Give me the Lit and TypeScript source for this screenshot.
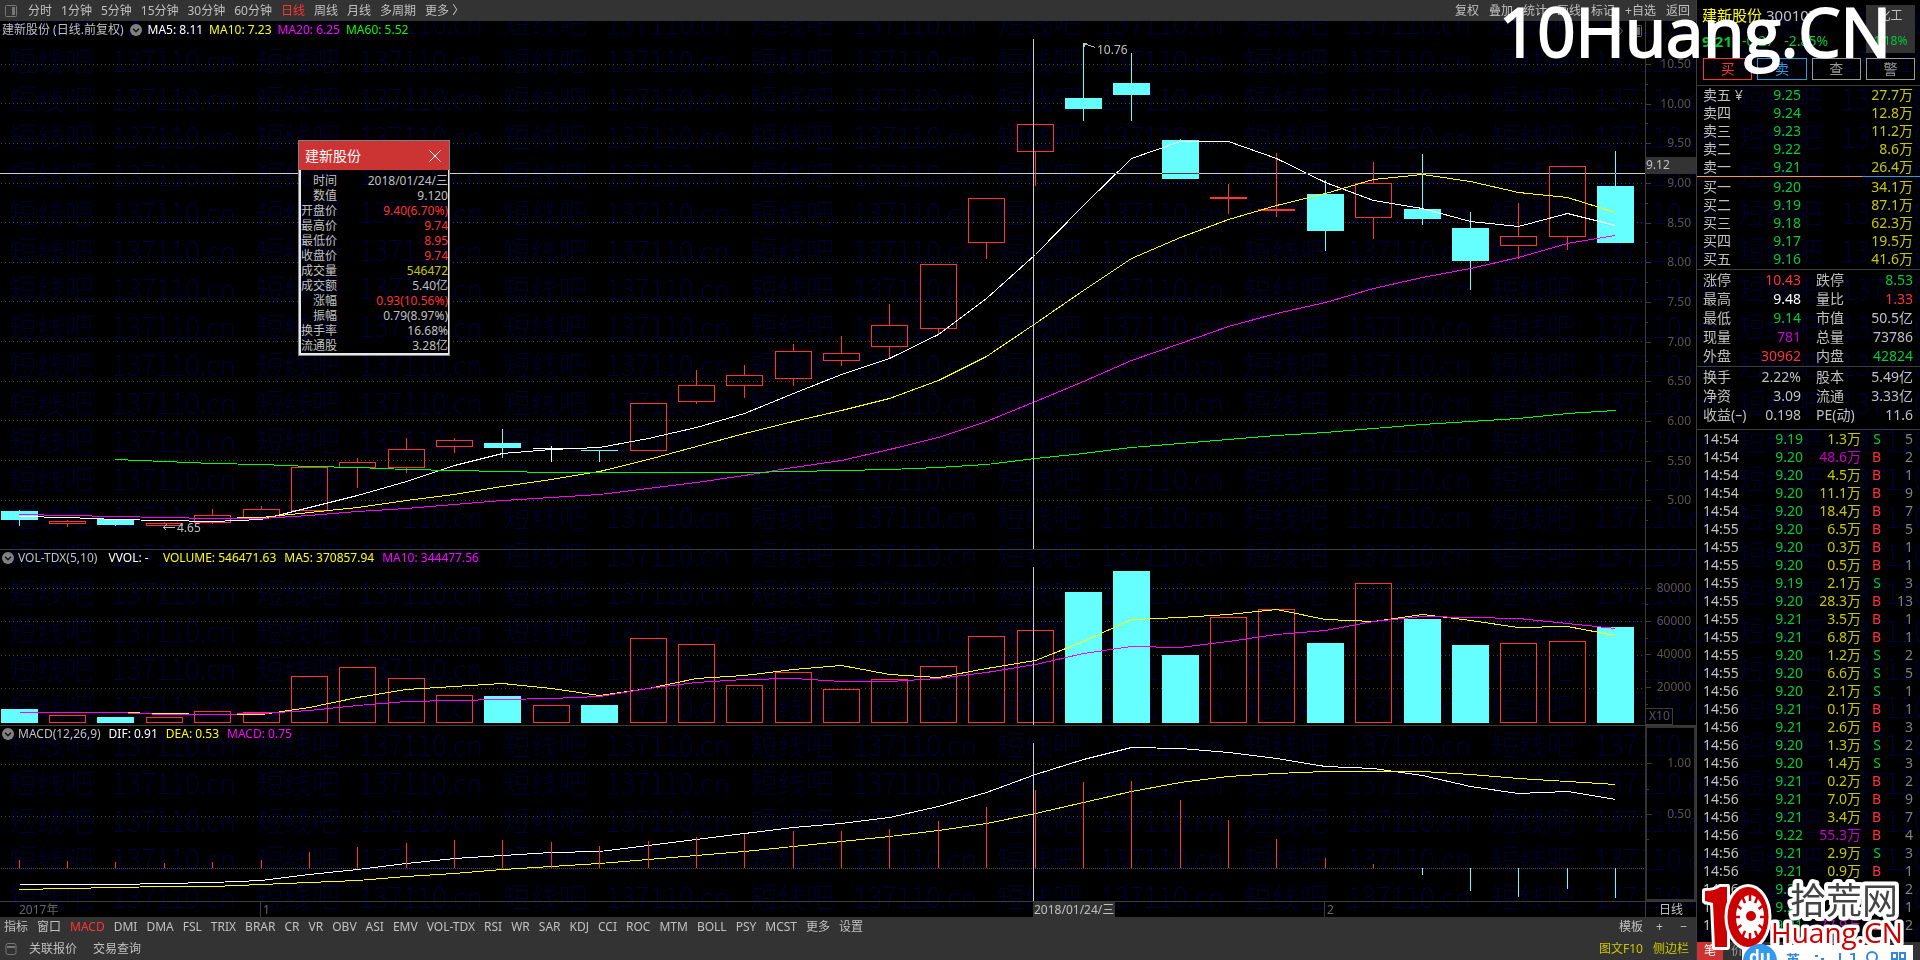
import { LitElement, html, svg, css } from "lit";
import { customElement, state } from "lit/decorators.js";

type Kind = "up" | "down" | "flat";
type Candle = [Kind, number, number, number, number, number, number];

const FIRST = 19.1;
const STEP = 48.38;
const PLOT_W = 1645;
const cx = (i: number) => Math.floor(FIRST + i * STEP) + 0.5;

// kind, high, body top, body bottom, low, volume top, macd bar end
const CANDLES: Candle[] = [
  ["down", 510, 511, 520, 526, 709, 860],
  ["up", 520, 521, 523, 527, 715, 861],
  ["down", 519, 519, 525, 526, 717, 862],
  ["up", 522, 523, 525, 525, 717, 863],
  ["up", 509, 515, 522, 524, 711, 862],
  ["up", 506, 509, 517, 517, 712, 860],
  ["up", 467, 467, 510, 510, 676, 852],
  ["up", 458, 462, 467, 488, 667, 847],
  ["up", 438, 449, 467, 473, 678, 843],
  ["up", 438, 440, 446, 453, 695, 840],
  ["down", 429, 443, 448, 458, 696, 840],
  ["flat", 446, 448, 449, 462, 705, 842],
  ["down", 450, 450, 451, 462, 705, 846],
  ["up", 403, 403, 450, 450, 638, 841],
  ["up", 370, 385, 401, 404, 644, 837],
  ["up", 365, 375, 385, 398, 685, 834],
  ["up", 344, 351, 378, 386, 672, 831],
  ["up", 336, 353, 360, 366, 689, 831],
  ["up", 304, 325, 346, 358, 679, 829],
  ["up", 264, 264, 328, 334, 666, 821],
  ["up", 198, 198, 242, 259, 636, 807],
  ["up", 124, 124, 151, 186, 630, 790],
  ["down", 43, 98, 109, 121, 592, 782],
  ["down", 53, 83, 95, 121, 571, 781],
  ["down", 139, 140, 179, 179, 655, 800],
  ["up", 184, 197, 198, 214, 617, 820],
  ["up", 153, 209, 210, 217, 609, 839],
  ["down", 180, 194, 231, 251, 643, 858],
  ["up", 162, 183, 217, 239, 583, 864],
  ["down", 154, 209, 219, 225, 619, 875],
  ["down", 212, 228, 261, 290, 645, 891],
  ["up", 203, 236, 245, 259, 643, 897],
  ["up", 166, 166, 236, 250, 641, 889],
  ["down", 151, 186, 243, 243, 627, 898],
];

const MA5 = [516, 517, 519, 520, 521, 519, 507, 495, 481, 465, 453, 449, 447, 438, 427, 413, 393, 374, 358, 334, 298, 254, 205, 158, 141, 141, 158, 182, 200, 208, 221, 226, 213, 225];
const MA10 = [514, 515, 516, 517, 518, 517, 512, 507, 500, 494, 486, 479, 471, 459, 446, 433, 421, 410, 398, 380, 356, 323, 290, 258, 237, 219, 205, 193, 179, 174, 181, 192, 197, 212];
const MA20 = [514, 515, 516, 517, 518, 518, 515, 511, 508, 504, 500, 497, 494, 488, 482, 475, 467, 460, 449, 437, 421, 401, 381, 360, 343, 326, 313, 302, 288, 277, 268, 257, 243, 235];
const MA60 = [459, 461, 463, 464, 466, 467, 469, 470, 471, 472, 472, 472, 472, 472, 471, 470, 469, 467, 464, 458, 453, 447, 443, 439, 435, 432, 428, 424, 421, 418, 413, 410];
const VMA5 = [712, 712, 712, 713, 714, 714, 707, 697, 689, 686, 683, 688, 695, 688, 678, 675, 669, 665, 674, 677, 668, 660, 641, 619, 617, 614, 609, 619, 621, 614, 620, 627, 626, 635];
const VMA10 = [712, 712, 712, 714, 714, 713, 710, 705, 701, 700, 699, 698, 696, 688, 682, 679, 678, 681, 681, 678, 672, 664, 653, 646, 647, 641, 634, 630, 621, 616, 617, 618, 623, 628];
const DIF = [884, 884, 884, 883, 882, 880, 874, 869, 863, 858, 855, 852, 851, 845, 839, 833, 827, 823, 817, 806, 792, 774, 759, 747, 748, 752, 758, 766, 768, 775, 786, 793, 791, 799];
const DEA = [889, 888, 887, 886, 886, 884, 882, 880, 876, 873, 869, 866, 863, 859, 855, 851, 846, 841, 836, 830, 823, 813, 802, 791, 782, 776, 773, 771, 771, 771, 774, 778, 781, 784];

const PERIODS = ["分时", "1分钟", "5分钟", "15分钟", "30分钟", "60分钟", "日线", "周线", "月线", "多周期", "更多 〉"];
const TOOLS = ["复权", "叠加", "统计", "画线", "标记", "+自选", "返回"];
const INDICATORS = ["指标", "窗口", "MACD", "DMI", "DMA", "FSL", "TRIX", "BRAR", "CR", "VR", "OBV", "ASI", "EMV", "VOL-TDX", "RSI", "WR", "SAR", "KDJ", "CCI", "ROC", "MTM", "BOLL", "PSY", "MCST", "更多", "设置"];

const SELLS = [["卖五", "9.25", "27.7万"], ["卖四", "9.24", "12.8万"], ["卖三", "9.23", "11.2万"], ["卖二", "9.22", "8.6万"], ["卖一", "9.21", "26.4万"]];
const BUYS = [["买一", "9.20", "34.1万"], ["买二", "9.19", "87.1万"], ["买三", "9.18", "62.3万"], ["买四", "9.17", "19.5万"], ["买五", "9.16", "41.6万"]];

const STATS_A = [
  ["涨停", "10.43", "red", "跌停", "8.53", "green"],
  ["最高", "9.48", "white", "量比", "1.33", "red"],
  ["最低", "9.14", "green", "市值", "50.5亿", ""],
  ["现量", "781", "magenta", "总量", "73786", ""],
  ["外盘", "30962", "red", "内盘", "42824", "green"],
];
const STATS_B = [
  ["换手", "2.22%", "", "股本", "5.49亿", ""],
  ["净资", "3.09", "", "流通", "3.33亿", ""],
  ["收益(–)", "0.198", "", "PE(动)", "11.6", ""],
];

const TICKS = `14:54 9.19 1.3 S 5
14:54 9.20 48.6 B 2
14:54 9.20 4.5 B 1
14:54 9.20 11.1 B 9
14:54 9.20 18.4 B 7
14:55 9.20 6.5 B 5
14:55 9.20 0.3 B 1
14:55 9.20 0.5 B 1
14:55 9.19 2.1 S 3
14:55 9.20 28.3 B 13
14:55 9.21 3.5 B 1
14:55 9.21 6.8 B 1
14:55 9.20 1.2 S 2
14:55 9.20 6.6 S 5
14:56 9.20 2.1 S 1
14:56 9.21 0.1 B 1
14:56 9.21 2.6 B 3
14:56 9.20 1.3 S 2
14:56 9.20 1.4 S 3
14:56 9.21 0.2 B 2
14:56 9.21 7.0 B 9
14:56 9.21 3.4 B 7
14:56 9.22 55.3 B 4
14:56 9.21 2.9 S 3
14:56 9.21 0.9 B 1
14:56 9.21 1.0 S 2
14:56 9.21 1.8 B 1
14:56 9.21 77.9 B 2`.split("\n").map((l) => l.split(" "));

const DETAIL = [
  ["时间", "2018/01/24/三", ""],
  ["数值", "9.120", ""],
  ["开盘价", "9.40(6.70%)", "red"],
  ["最高价", "9.74", "red"],
  ["最低价", "8.95", "red"],
  ["收盘价", "9.74", "red"],
  ["成交量", "546472", "olive"],
  ["成交额", "5.40亿", ""],
  ["涨幅", "0.93(10.56%)", "red"],
  ["振幅", "0.79(8.97%)", ""],
  ["换手率", "16.68%", ""],
  ["流通股", "3.28亿", ""],
];

const line = (ys: number[], color: string, from = 0) =>
  svg`<polyline points=${ys.map((y, i) => `${cx(i + from)},${y + 0.5}`).join(" ")} fill="none" stroke=${color}/>`;

const rules = (ys: number[]) =>
  ys.map((y) => svg`<line x1="1" x2=${PLOT_W} y1=${y + 0.5} y2=${y + 0.5} stroke="#444" stroke-dasharray="1 3"/>`);

const box = (i: number, top: number, bottom: number, kind: Kind) => {
  const x = cx(i) - 18.5;
  if (kind === "down") return svg`<rect x=${x} y=${top} width="37" height=${Math.max(1, bottom - top)} fill="#66ffff"/>`;
  if (kind === "flat") return svg`<rect x=${x} y=${top} width="37" height="1" fill="#fff"/>`;
  return svg`<rect x=${x + 0.5} y=${top + 0.5} width="36" height=${bottom - top} fill="none" stroke="#ff3333"/>`;
};

const tint = { up: "#ff3333", down: "#66ffff", flat: "#ffffff" };

const wick = (i: number, a: number, b: number, color: string) =>
  b > a ? svg`<line x1=${cx(i)} x2=${cx(i)} y1=${a} y2=${b} stroke=${color}/>` : null;

const watermark = (id: string, dx: number, dy: number) => html`
  <svg class="watermark" aria-hidden="true">
    <defs>
      <pattern id=${id} x=${dx} y=${dy} width="247" height="38" patternUnits="userSpaceOnUse">
        <text class="mark" y="29"><tspan x="9">短线吧</tspan><tspan x="112">137110.cn</tspan></text>
      </pattern>
    </defs>
    <rect width="100%" height="100%" fill=${`url(#${id})`}/>
  </svg>`;

const chevron = html`<svg class="chev" viewBox="0 0 12 12" aria-hidden="true"><circle cx="6" cy="6" r="6" fill="#808080"/><path d="M3 4.8l3 3 3-3" fill="none" stroke="#111" stroke-width="1.4"/></svg>`;

@customElement("app-root")
export class AppRoot extends LitElement {
  @state() private period = "日线";
  @state() private indicator = "MACD";
  @state() private detail = true;

  static styles = css`
    :host {
      display: grid;
      grid-template-columns: minmax(0, 1fr) 224px;
      height: 100vh;
      position: relative;
      overflow: hidden;
      isolation: isolate;
      background: #000;
      color: #c0c0c0;
      font: 12px/16px "Noto Sans", "Noto Sans CJK SC", sans-serif;
    }
    * { box-sizing: border-box; }
    button { font: inherit; color: inherit; background: none; border: 0; padding: 0; white-space: nowrap; cursor: pointer; }
    a { color: inherit; text-decoration: none; }
    table { border-collapse: collapse; table-layout: fixed; width: 100%; }
    td, th { padding: 0; font-weight: 400; text-align: right; white-space: nowrap; }
    th { text-align: left; }
    .watermark { position: absolute; inset: 0; width: 100%; height: 100%; z-index: -1; }
    .mark { font: 100 28px "Noto Sans CJK SC", sans-serif; fill: #000046; }
    .red { color: #ff3333; }
    .green { color: #00cc33; }
    .white { color: #fff; }
    .yellow { color: #ff0; }
    .olive { color: #c8c800; }
    .lime { color: #0f0; }
    .magenta { color: #c800c8; }
    .pink { color: #f0f; }

    .main { display: flex; flex-direction: column; min-width: 0; }
    .bar { display: flex; align-items: center; background: #333; flex: none; }
    .top { height: 21px; padding: 0 6px 0 5px; gap: 9px; }
    .top > .icon { margin-right: 2px; }
    .spring { flex: 1; }
    .icon { width: 12px; height: 12px; flex: none; }
    .tools { display: flex; gap: 10px; }

    .pane { display: flex; min-height: 0; border-top: 1px solid #3c3c3c; }
    .price { flex: 528 1 0; border-top: 0; }
    .sub { flex: 175 1 0; }
    .plot { flex: 1; position: relative; min-width: 0; }
    .chart { position: absolute; inset: 0; width: 100%; height: 100%; shape-rendering: crispEdges; }
    .cross { mix-blend-mode: difference; }
    .legend { position: relative; display: flex; align-items: center; height: 18px; padding-left: 2px; gap: 6px; color: #fff; white-space: nowrap; }
    .sub .legend { gap: 8px; height: 16px; }
    .sub .chev { margin-right: -4px; }
    .legend .name { color: #c0c0c0; }
    .chev { width: 12px; height: 12px; flex: none; }
    .corner { position: absolute; top: 4px; right: 3px; display: flex; gap: 6px; }
    .note { position: absolute; transform: translateY(-50%); }
    .axis { flex: none; width: 51px; border-left: 1px solid #3c3c3c; display: flex; flex-direction: column; color: #5c5454; position: relative; }
    .axis.a { padding: 23px 0 29px; }
    .axis.b { padding: 21px 0 0; }
    .axis.c { padding: 10px 0 60px; border: 2px solid #333; }
    .tick { flex: 1; display: flex; align-items: center; justify-content: flex-end; padding-right: 5px; position: relative; min-height: 0; }
    .c .tick { padding-right: 3px; }
    .tick::before, .tick::after { content: ""; position: absolute; left: 0; top: 50%; width: 5px; height: 1px; background: #3c3c3c; }
    .tick::after { top: 100%; width: 2px; }
    .unit { align-self: flex-start; border: 1px solid #3c3c3c; border-left: 0; height: 17px; width: 27px; line-height: 14px; padding-left: 3px; margin-top: 4px; }
    .tag { position: absolute; left: 0; right: 0; height: 17px; background: #333; color: #c0c0c0; }

    .dates { display: flex; height: 16px; flex: none; border-top: 1px solid #3c3c3c; color: #666; }
    .dates .plot { overflow: hidden; }
    .date { position: absolute; top: 0; height: 100%; line-height: 15px; }
    .split { border-left: 1px solid #3c3c3c; padding-left: 2px; }
    .hot { background: #333; color: #c0c0c0; padding: 0 1px; }
    .unitday { width: 51px; border-left: 1px solid #3c3c3c; text-align: center; line-height: 15px; color: #c0c0c0; }
    .tabs { height: 21px; padding: 0 9px 1px 4px; gap: 9px; }
    .foot { height: 22px; padding: 0 7px 0 5px; gap: 12px; }
    .foot .pair { display: flex; gap: 16px; }
    .foot .links { display: flex; gap: 10px; }
    .zoomers { display: flex; width: 35px; justify-content: space-between; padding-left: 4px; }

    .card { position: absolute; left: 298px; top: 119px; width: 152px; border: 1px solid #808080; background: #000; z-index: 1; isolation: isolate; }
    .cardhead { display: flex; justify-content: space-between; align-items: center; height: 29px; background: #cc3333; color: #fff; font-size: 14px; padding: 0 8px 0 6px; }
    .cardhead svg { width: 12px; height: 12px; display: block; }
    .cardbody { position: relative; border: solid #e8e8e8; border-width: 0 1px 2px 2px; padding: 3px 0 0; isolation: isolate; overflow: hidden; }
    .cardbody tr { height: 15px; }
    .cardbody td, .cardbody th { line-height: 15px; text-align: right; }
    .cardbody th { width: 36px; }

    .side { border-left: 1px solid #3c3c3c; display: flex; flex-direction: column; font-size: 14px; line-height: 18px; min-width: 0; overflow: hidden; }
    .quote { display: flex; padding: 5px 5px 0 5px; justify-content: space-between; height: 53px; flex: none; }
    .title { font-size: 15px; line-height: 20px; display: flex; gap: 4px; }
    .now { display: flex; gap: 10px; line-height: 20px; padding-top: 6px; }
    .now b { font-size: 15px; }
    .sector { width: 49px; height: 48px; background: #333; font-size: 12px; text-align: center; display: flex; flex-direction: column; justify-content: space-between; padding: 2px 0 3px; }
    .deal { display: grid; grid-template-columns: repeat(4, 1fr); gap: 5px; padding: 5px 5px 5px 6px; flex: none; }
    .deal button { height: 22px; border: 1px solid #999; color: #999; line-height: 18px; }
    .deal .buy { border-color: #ff3333; color: #ff3333; }
    .deal .sell { border-color: #3399dd; color: #3399dd; }
    .block { border-top: 1px solid #3c3c3c; padding: 0 7px 0 6px; flex: none; }
    .block tr { height: 18px; }
    .block td, .block th { line-height: 18px; }
    .p0 { width: 49px; }
    .p1 { width: 49px; }
    .split2 { height: 1px; flex: none; background: linear-gradient(90deg, #ff9933 0 74%, #3399dd 74%); }
    .bids { border-top: 0; padding-top: 1px; padding-bottom: 1px; }
    .stats tr { height: 19px; }
    .statsa { padding-bottom: 1px; }
    .statsb { padding-bottom: 5px; }
    .stats .k1 { width: 39px; }
    .stats .v1 { width: 59px; }
    .stats .k2 { padding-left: 15px; width: 62px; }
    .ticks { flex: 1; min-height: 0; overflow: hidden; }
    .ticks .t { width: 50px; }
    .ticks .p { width: 50px; }
    .ticks .v { width: 58px; }
    .ticks .s { width: 20px; }
    .num { color: #808080; }
    .sidefoot { display: flex; background: #333; height: 18px; flex: none; font-size: 12px; color: #999; gap: 8px; }
    .sidefoot button { line-height: 18px; }
    .sidefoot .on { background: #cc3333; color: #fff; width: 26px; }

    .brand { position: absolute; right: 29px; top: -14px; font: 67px/90px "Open Sans", "Noto Sans", sans-serif; color: #fff; -webkit-text-stroke: 2px #fff; z-index: 2; pointer-events: none; }
    .logo { position: absolute; right: 0; bottom: 0; width: 220px; height: 84px; z-index: 2; pointer-events: none; }
    .logo .cn { font: 36px "Noto Sans CJK SC", sans-serif; }
    .logo .en { font: 28px "Open Sans", "Noto Sans", sans-serif; }
    .logo .ime { font: 700 14px "Noto Sans CJK SC", sans-serif; }
    .logo .du { font: 700 17px "Noto Sans", sans-serif; }
  `;

  private pricePane() {
    return html`<section class="pane price">
      <div class="plot">
        <svg class="chart" viewBox="0 21 1645 528" preserveAspectRatio="none">
          ${rules([64, 103, 143, 183, 222, 262, 301, 341, 381, 420, 460, 500])}
          ${CANDLES.map(([k, h, t, b, l], i) => svg`${wick(i, h, t, tint[k])}${wick(i, b, l, tint[k])}${box(i, t, b, k)}`)}
          ${line(MA5, "#fff")}${line(MA10, "#ff0")}${line(MA20, "#f0f")}${line(MA60, "#0f0", 2)}
          <path d="M1083.5 43.5l12 4M1083.5 43.5h3M1084 43l1 4M163.5 527.5h11M163.5 527.5l3-3M163.5 527.5l3 3" stroke="#c0c0c0" fill="none"/>
          <line class="cross" x1="0" x2="1645" y1="173.5" y2="173.5" stroke="#ccc"/>
          <line x1="1033.5" x2="1033.5" y1="39" y2="549" stroke="#ccc"/>
        </svg>
        <div class="legend">
          <span class="name">建新股份 (日线.前复权)</span>${chevron}
          <span>MA5: 8.11</span><span class="yellow">MA10: 7.23</span><span class="pink">MA20: 6.25</span><span class="lime">MA60: 5.52</span>
        </div>
        <div class="corner">
          <svg class="icon" viewBox="0 0 12 12"><path d="M6 1l4.5 5L6 11 1.5 6z" fill="none" stroke="#666"/></svg>
          <svg class="icon" viewBox="0 0 12 12"><rect x=".5" y=".5" width="11" height="11" rx="1" fill="none" stroke="#666"/><path d="M7 2h3v8H7z" fill="#666"/></svg>
        </div>
        <span class="note" style="left:${(1097 / PLOT_W) * 100}%;top:${(29 / 528) * 100}%">10.76</span>
        <span class="note" style="left:${(177 / PLOT_W) * 100}%;top:${(507 / 528) * 100}%">4.65</span>
        ${this.detail ? this.card() : null}
      </div>
      <div class="axis a">
        ${["10.50", "10.00", "9.50", "9.00", "8.50", "8.00", "7.50", "7.00", "6.50", "6.00", "5.50", "5.00"].map((v) => html`<span class="tick">${v}</span>`)}
        <span class="tag" style="top:${(136 / 528) * 100}%">9.12</span>
      </div>
    </section>`;
  }

  private card() {
    return html`<div class="card" role="dialog" aria-label="建新股份">
      <div class="cardhead"><span>建新股份</span>
        <button aria-label="关闭" @click=${() => (this.detail = false)}><svg viewBox="0 0 12 12"><path d="M.5 .5l11 11M11.5 .5l-11 11" stroke="#fff" fill="none"/></svg></button>
      </div>
      <div class="cardbody">
        ${watermark("wm2", -54, -14)}
        <table>${DETAIL.map(([k, v, c]) => html`<tr><th scope="row">${k}</th><td class=${c}>${v}</td></tr>`)}</table>
      </div>
    </div>`;
  }

  private volumePane() {
    return html`<section class="pane sub">
      <div class="plot">
        <svg class="chart" viewBox="0 550 1645 175" preserveAspectRatio="none">
          ${rules([588, 621, 655, 688])}
          ${CANDLES.map((c, i) => box(i, c[5], c[0] === "down" ? 723 : 722, c[0] === "flat" ? "up" : c[0]))}
          ${line(VMA5, "#ff0")}${line(VMA10, "#f0f")}
          <line x1="1033.5" x2="1033.5" y1="567" y2="725" stroke="#ccc"/>
        </svg>
        <div class="legend">${chevron}<span class="name">VOL-TDX(5,10)</span><span>&nbsp;VVOL: -&nbsp;&nbsp;</span><span class="yellow">VOLUME: 546471.63</span><span class="yellow">MA5: 370857.94</span><span class="pink">MA10: 344477.56</span></div>
      </div>
      <div class="axis b">
        ${["80000", "60000", "40000", "20000"].map((v) => html`<span class="tick">${v}</span>`)}
        <span class="unit">X10</span>
      </div>
    </section>`;
  }

  private macdPane() {
    return html`<section class="pane sub">
      <div class="plot">
        <svg class="chart" viewBox="0 726 1645 175" preserveAspectRatio="none">
          ${rules([764, 816])}
          <line x1="1" x2="1645" y1="868.5" y2="868.5" stroke="#555" stroke-dasharray="1 1"/>
          ${line(DIF, "#fff")}${line(DEA, "#ff0")}
          ${CANDLES.map((c, i) => (c[6] < 868 ? wick(i, c[6], 868, "#ff3333") : wick(i, 868, c[6], "#66ffff")))}
          <line x1="1033.5" x2="1033.5" y1="743" y2="901" stroke="#ccc"/>
        </svg>
        <div class="legend">${chevron}<span class="name">MACD(12,26,9)</span><span>DIF: 0.91</span><span class="yellow">DEA: 0.53</span><span class="pink">MACD: 0.75</span></div>
      </div>
      <div class="axis c"><span class="tick">1.00</span><span class="tick">0.50</span></div>
    </section>`;
  }

  private depth(rows: string[][], yen = false) {
    return html`<table><colgroup><col class="p0" /><col class="p1" /><col /></colgroup>
      ${rows.map(([k, p, v], i) => html`<tr><th scope="row">${k}${yen && i === 0 ? " ¥" : ""}</th><td class="green">${p}</td><td class="olive">${v}</td></tr>`)}</table>`;
  }

  private stats(rows: string[][]) {
    return html`<table>${rows.map((r) => html`<tr><th class="k1" scope="row">${r[0]}</th><td class="v1 ${r[2]}">${r[1]}</td><th class="k2" scope="row">${r[3]}</th><td class=${r[5]}>${r[4]}</td></tr>`)}</table>`;
  }

  private logo() {
    const teeth = [0, 30, 60, 90, 120, 150, 180, 210, 240, 270, 300, 330];
    return html`<svg class="logo" viewBox="1700 876 220 84" aria-hidden="true">
      <rect x="1742" y="945" width="171" height="16" fill="#fff"/>
      <g fill="#cc0000" stroke="#fff" stroke-width="6" stroke-linejoin="round" paint-order="stroke">
        <path d="M1705 891q10 0 15-4h7v60h-12l-2-44-8-2z"/>
        <ellipse cx="1748" cy="917" rx="20.500" ry="30"/>
      </g>
      <ellipse cx="1750" cy="917" rx="14" ry="22" fill="#fff"/>
      ${teeth.map((a) => {
        const r = (a * Math.PI) / 180;
        return svg`<line x1=${1750 + 10 * Math.cos(r)} y1=${917 + 16 * Math.sin(r)} x2=${1750 + 15 * Math.cos(r)} y2=${917 + 23 * Math.sin(r)} stroke="#cc0000" stroke-width="2.500"/>`;
      })}
      <circle cx="1751" cy="916" r="5" fill="#cc0000"/>
      <circle cx="1760" cy="961" r="17" fill="#3399ee"/>
      <text class="du" x="1749" y="963" fill="#fff">du</text>
      <text class="ime" x="1786" y="965" fill="#3388dd">英</text>
      <g fill="none" stroke="#3388dd" stroke-width="2">
        <path d="M1815 956h3M1821 959h3M1840 953v7M1850 954h4v6M1892 953h5v6h-5zM1900 953h5v6h-5z"/>
        <circle cx="1872" cy="957" r="5"/>
      </g>
      <g stroke="#fff" stroke-linejoin="round" paint-order="stroke">
        <text class="cn" x="1790" y="914" fill="#444" stroke-width="8">拾荒网</text>
        <text class="en" x="1771" y="943" fill="#cc0000" stroke-width="7">Huang.CN</text>
      </g>
    </svg>`;
  }

  render() {
    return html`
      ${watermark("wm", 0, 5)}
      <main class="main">
        <nav class="bar top">
          <svg class="icon" viewBox="0 0 12 12"><rect x=".5" y=".5" width="11" height="11" rx="1" fill="none" stroke="#777"/><path d="M7 2h3v8H7z" fill="#777"/></svg>
          ${PERIODS.map((p) => html`<button class=${p === this.period ? "red" : ""} @click=${() => (this.period = p)}>${p}</button>`)}
          <span class="spring"></span>
          <span class="tools">${TOOLS.map((t) => html`<button>${t}</button>`)}</span>
        </nav>
        ${this.pricePane()} ${this.volumePane()} ${this.macdPane()}
        <div class="dates">
          <div class="plot">
            ${[[19, "2017年", ""], [260, "1", "split"], [1033, "2018/01/24/三", "hot"], [1324, "2", "split"]].map(
              ([x, t, c]) => html`<span class="date ${c}" style="left:${(Number(x) / PLOT_W) * 100}%">${t}</span>`
            )}
          </div>
          <div class="unitday">日线</div>
        </div>
        <nav class="bar tabs">
          ${INDICATORS.map((t) => html`<button class=${t === this.indicator ? "red" : ""} @click=${() => (this.indicator = t)}>${t}</button>`)}
          <span class="spring"></span>
          <button>模板</button><span class="zoomers"><button>+</button><button>−</button></span>
        </nav>
        <footer class="bar foot">
          <svg class="icon" viewBox="0 0 12 12"><rect x="1" y=".5" width="10" height="11" rx="2" fill="none" stroke="#777"/><path d="M2 3h8v2H2z" fill="#777"/></svg>
          <span class="pair"><a href="#quotes">关联报价</a><a href="#orders">交易查询</a></span>
          <span class="spring"></span>
          <span class="links olive"><a href="#f10">图文F10</a><a href="#side">侧边栏</a></span>
        </footer>
      </main>
      <aside class="side">
        <header class="quote">
          <div>
            <div class="title"><span class="yellow">建新股份</span><span>300107</span></div>
            <div class="now green"><b>9.21</b><span>-0.27</span><span>-2.85%</span></div>
          </div>
          <div class="sector"><span>化工</span><span class="green">1.18%</span></div>
        </header>
        <div class="deal"><button class="buy">买</button><button class="sell">卖</button><button>查</button><button>警</button></div>
        <div class="block">${this.depth(SELLS, true)}</div>
        <div class="split2"></div>
        <div class="block bids">${this.depth(BUYS)}</div>
        <div class="block stats statsa">${this.stats(STATS_A)}</div>
        <div class="block stats statsb">${this.stats(STATS_B)}</div>
        <div class="block ticks">
          <table>
            ${TICKS.map(
              ([t, p, v, s, n]) => html`<tr>
                <th class="t" scope="row">${t}</th><td class="p green">${p}</td>
                <td class="v ${Number(v) > 40 ? "magenta" : "olive"}">${v}万</td>
                <td class="s ${s === "B" ? "red" : "green"}">${s}</td><td class="num">${n}</td>
              </tr>`
            )}
          </table>
        </div>
        <div class="sidefoot"><button class="on">笔</button><button>价</button></div>
      </aside>
      <div class="brand" aria-hidden="true">10Huang.CN</div>
      ${this.logo()}
    `;
  }
}
